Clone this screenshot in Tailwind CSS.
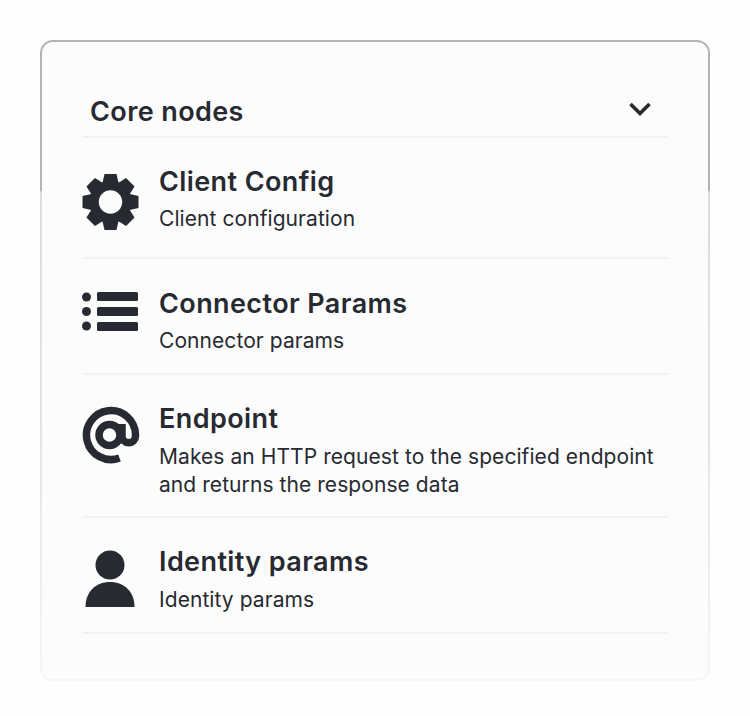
<!DOCTYPE html>
<html lang="en">
<head>
  <meta charset="UTF-8">
  <meta name="viewport" content="width=device-width, initial-scale=1.0">
  <title>Core nodes</title>
  <script src="https://cdn.jsdelivr.net/npm/@tailwindcss/browser@4"></script>
</head>
<body class="min-h-screen bg-[#fefefe] font-['Inter',sans-serif] text-[#272a31]">
  <div class="pt-10 pl-10">
    <div class="w-[670px] h-[641px] rounded-[13px] p-[2px] bg-[linear-gradient(to_bottom,#b4b4b4_0,#b4b4b4_150px,#dcdcdc_152px,#e4e4e4_400px,#f6f6f6_640px)]">
      <div class="h-full rounded-[11px] bg-[#fcfcfc] px-[40px] pt-[50px]">

        <div class="flex items-center justify-between h-[46px] pl-2 pr-[17px] border-b-2 border-[#f3f2f2]">
          <h2 class="text-[27px] leading-[38px] font-semibold tracking-[0.4px] mb-[5px]">Core nodes</h2>
          <svg class="w-[22px] h-[14px] mb-[10px]" viewBox="0 0 22 14" fill="none" stroke="#272a31" stroke-width="3.6">
            <path d="M1.5 2l9.5 9.5L20.5 2"/>
          </svg>
        </div>

        <div class="flex gap-[19px] pt-[24px] h-[121px] border-b-2 border-[#f3f2f2]">
          <svg class="w-[58px] h-[58px] mt-[11px] shrink-0" viewBox="0 0 58 58" fill="#272a31">
            <circle cx="28.5" cy="29" r="21"/>
            <polygon points="22.5,1 34.5,1 37,12 20,12"/>
            <polygon points="22.5,1 34.5,1 37,12 20,12" transform="rotate(45 28.5 29)"/>
            <polygon points="22.5,1 34.5,1 37,12 20,12" transform="rotate(90 28.5 29)"/>
            <polygon points="22.5,1 34.5,1 37,12 20,12" transform="rotate(135 28.5 29)"/>
            <polygon points="22.5,1 34.5,1 37,12 20,12" transform="rotate(180 28.5 29)"/>
            <polygon points="22.5,1 34.5,1 37,12 20,12" transform="rotate(225 28.5 29)"/>
            <polygon points="22.5,1 34.5,1 37,12 20,12" transform="rotate(270 28.5 29)"/>
            <polygon points="22.5,1 34.5,1 37,12 20,12" transform="rotate(315 28.5 29)"/>
            <circle cx="28.5" cy="29" r="11.7" fill="#fcfcfc"/>
          </svg>
          <div>
            <h3 class="text-[27px] leading-[40px] font-semibold tracking-[0.4px]">Client Config</h3>
            <p class="mt-[3px] text-[21px] leading-[28px] tracking-[0.07px]">Client configuration</p>
          </div>
        </div>

        <div class="flex gap-[19px] pt-[25px] h-[116px] border-b-2 border-[#f3f2f2]">
          <svg class="w-[58px] h-[42px] mt-[7px] shrink-0" viewBox="0 0 58 42" fill="#272a31">
            <circle cx="4.5" cy="6" r="4.5"/>
            <circle cx="4.5" cy="20.5" r="4.5"/>
            <circle cx="4.5" cy="35" r="4.5"/>
            <rect x="15" y="1" width="41" height="9" rx="1.5"/>
            <rect x="15" y="16" width="41" height="9" rx="1.5"/>
            <rect x="15" y="31" width="41" height="9" rx="1.5"/>
          </svg>
          <div>
            <h3 class="text-[27px] leading-[40px] font-semibold tracking-[0.4px]">Connector Params</h3>
            <p class="mt-[3px] text-[21px] leading-[28px] tracking-[0.07px]">Connector params</p>
          </div>
        </div>

        <div class="flex gap-[19px] pt-[24px] h-[143px] border-b-2 border-[#f3f2f2]">
          <svg class="w-[58px] h-[58px] mt-[7px] shrink-0" viewBox="0 0 58 58" fill="none" stroke="#272a31" stroke-width="7.5">
            <path d="M37.5 52A24.5 24.5 0 1 1 53.5 29v1a6.75 6.75 0 0 1-13.5 0V18"/>
            <circle cx="27.5" cy="29" r="10.5"/>
          </svg>
          <div>
            <h3 class="text-[27px] leading-[40px] font-semibold tracking-[0.4px]">Endpoint</h3>
            <p class="mt-[4px] text-[21px] leading-[28px] tracking-[0.07px]">Makes an HTTP request to the specified endpoint and returns the response data</p>
          </div>
        </div>

        <div class="flex gap-[19px] pt-[24px] h-[116px] border-b-2 border-[#f3f2f2]">
          <svg class="w-[58px] h-[60px] mt-[8px] shrink-0" viewBox="0 0 58 60" fill="#272a31">
            <circle cx="28" cy="15" r="14.5"/>
            <path d="M3.5 57c0-15 10-25 24.5-25s24.5 10 24.5 25z"/>
          </svg>
          <div>
            <h3 class="text-[27px] leading-[40px] font-semibold tracking-[0.4px]">Identity params</h3>
            <p class="mt-[4px] text-[21px] leading-[28px] tracking-[0.07px]">Identity params</p>
          </div>
        </div>

      </div>
    </div>
  </div>
</body>
</html>
